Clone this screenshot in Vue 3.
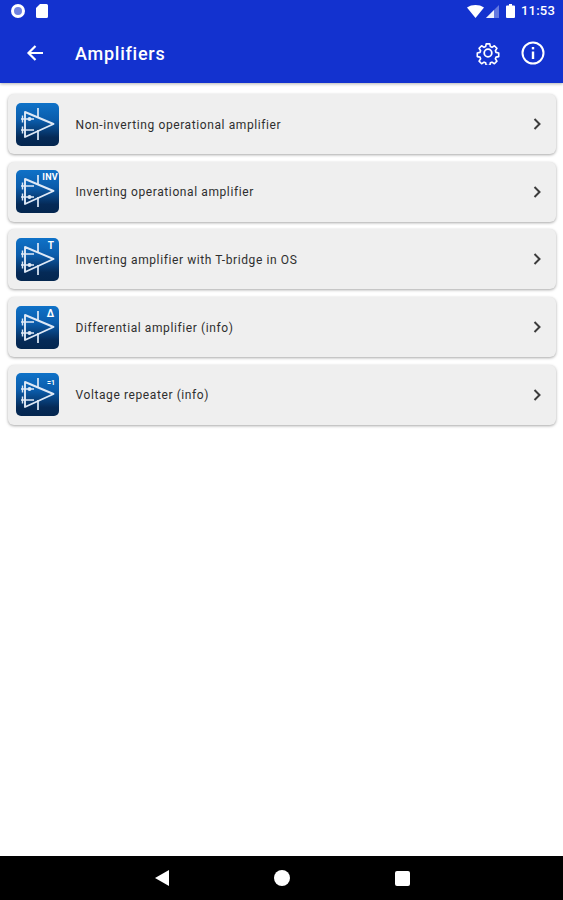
<template>
  <div class="screen">
    <header class="app-header">
      <div class="status-bar">
        <div class="status-left">
          <span class="notif-dot"></span>
          <svg class="sd-icon" width="12" height="14" viewBox="0 0 12 14">
            <path d="M4 0H10.500A1.500 1.500 0 0 1 12 1.500V12.500A1.500 1.500 0 0 1 10.500 14H1.500A1.500 1.500 0 0 1 0 12.500V4Z" fill="#fff" />
          </svg>
        </div>
        <div class="status-right">
          <svg width="17" height="13" viewBox="0 0 17 13">
            <path d="M0 2.500C4.800-.8 12.200-.8 17 2.500L8.500 13Z" fill="#fff" />
          </svg>
          <svg class="signal" width="13" height="13" viewBox="0 0 13 13">
            <path d="M13 0V13H0Z" fill="#fff" opacity=".35" />
            <path d="M8 5V13H0Z" fill="#fff" opacity=".9" />
          </svg>
          <svg class="battery" width="9" height="14" viewBox="0 0 9 14">
            <path d="M3 0H6V1.500H8A1 1 0 0 1 9 2.500V13A1 1 0 0 1 8 14H1A1 1 0 0 1 0 13V2.500A1 1 0 0 1 1 1.500H3Z" fill="#fff" />
          </svg>
          <span class="clock">11:53</span>
        </div>
      </div>
      <div class="toolbar">
        <button class="icon-btn back" aria-label="Back">
          <svg width="18" height="18" viewBox="0 0 18 18" fill="none" stroke="#fff" stroke-width="2.200">
            <path d="M17 9H2.500M9.500 2 2.500 9l7 7" />
          </svg>
        </button>
        <h1>Amplifiers</h1>
        <button class="icon-btn gear" aria-label="Settings">
          <svg width="24" height="24" viewBox="0 0 24 24" fill="none" stroke="#fff" stroke-width="1.800" stroke-linejoin="round">
            <path d="M10 1.800h4l.6 3.100 1.800.8 2.700-1.700 2.800 2.900-1.700 2.600.7 1.800 3 .7v4l-3 .6-.7 1.800 1.700 2.700-2.800 2.800-2.700-1.700-1.800.7-.6 3h-4l-.6-3-1.800-.7-2.700 1.700-2.800-2.800 1.700-2.700-.7-1.800-3-.6v-4l3-.7.700-1.800-1.700-2.600 2.800-2.900 2.700 1.700 1.800-.8Z" transform="translate(1.200 1.200) scale(.9)" />
            <circle cx="12" cy="12" r="3.800" />
          </svg>
        </button>
        <button class="icon-btn info" aria-label="Info">
          <svg width="24" height="24" viewBox="0 0 24 24" fill="none" stroke="#fff">
            <circle cx="12" cy="12" r="10.500" stroke-width="2" />
            <path d="M12 10.500V18" stroke-width="2.400" />
            <path d="M12 6V8.400" stroke-width="2.400" />
          </svg>
        </button>
      </div>
    </header>

    <main class="list">
      <div v-for="item in items" :key="item.title" class="card">
        <div class="thumb">
          <svg width="43" height="43" viewBox="0 0 43 43" fill="none" stroke="#dfe9f6" stroke-width="1.700">
            <path d="M9 9V34L37.500 21Z" stroke-width="1.900" stroke-linejoin="round" />
            <path d="M22 5V15M22 27V37M5 16H18M5 27H18" />
            <path d="M6.500 12.500V19.500M6.500 23.500V30.500" stroke-width="1.400" />
            <circle cx="13.500" :cy="item.dotY" r="2" fill="#dfe9f6" stroke="none" />
          </svg>
          <span v-if="item.badge" class="badge" :class="item.badgeClass">{{ item.badge }}</span>
        </div>
        <span class="title">{{ item.title }}</span>
        <svg class="chevron" width="9" height="12" viewBox="0 0 9 12" fill="none" stroke="#3c3c3c" stroke-width="2">
          <path d="M1.500 1 6.500 6l-5 5" />
        </svg>
      </div>
    </main>

    <nav class="nav-bar">
      <svg width="14" height="16" viewBox="0 0 14 16"><path d="M14 0V16L0 8Z" fill="#fff" /></svg>
      <span class="home"></span>
      <span class="recent"></span>
    </nav>
  </div>
</template>

<script setup>
const items = [
  { title: 'Non-inverting operational amplifier', badge: '', dotY: 16 },
  { title: 'Inverting operational amplifier', badge: 'INV', badgeClass: 'inv', dotY: 27 },
  { title: 'Inverting amplifier with T-bridge in OS', badge: 'T', badgeClass: 't', dotY: 27 },
  { title: 'Differential amplifier (info)', badge: 'Δ', badgeClass: 't', dotY: 27 },
  { title: 'Voltage repeater (info)', badge: '=1', badgeClass: 'one', dotY: 16 }
]
</script>

<style>
body {
  background: #fff;
}
</style>

<style scoped>
.screen {
  width: 563px;
  height: 900px;
  display: flex;
  flex-direction: column;
  background: #fff;
  font-family: Roboto, "Liberation Sans", sans-serif;
  overflow: hidden;
}

.app-header {
  height: 83px;
  flex: none;
  background: #1332cf;
  color: #fff;
  box-shadow: 0 1px 3px rgba(0, 0, 0, 0.3);
}

.status-bar {
  height: 25px;
  padding: 4px 8px 0 11px;
  box-sizing: border-box;
  display: flex;
  justify-content: space-between;
  align-items: flex-start;
}

.status-left {
  display: flex;
  align-items: center;
  gap: 11px;
}

.notif-dot {
  width: 14px;
  height: 14px;
  box-sizing: border-box;
  border: 3px solid #fff;
  border-radius: 50%;
  background: #6f82e0;
}

.status-right {
  display: flex;
  align-items: center;
}

.signal {
  margin-left: 2px;
}

.battery {
  margin-left: 7px;
}

.clock {
  margin-left: 6px;
  font-size: 13px;
  font-weight: 500;
  line-height: 14px;
  letter-spacing: 0.2px;
}

.toolbar {
  height: 58px;
  display: flex;
  align-items: center;
  padding-bottom: 2px;
  box-sizing: border-box;
}

.icon-btn {
  padding: 0;
  border: 0;
  background: none;
  display: flex;
}

.back {
  margin-left: 26px;
}

.toolbar h1 {
  margin: 0 0 0 31px;
  flex: 1;
  font-size: 18px;
  font-weight: 500;
  letter-spacing: 0.75px;
}

.gear {
  margin-right: 21px;
}

.info {
  margin-right: 18px;
}

.list {
  flex: 1;
  padding: 11px 7px 0 8px;
  display: flex;
  flex-direction: column;
  gap: 7.700px;
}

.card {
  height: 60px;
  flex: none;
  padding: 0 14px 0 8px;
  box-sizing: border-box;
  display: flex;
  align-items: center;
  background: #efefef;
  border-radius: 6px;
  box-shadow: 0 1px 3px rgba(0, 0, 0, 0.35);
}

.thumb {
  position: relative;
  width: 43px;
  height: 43px;
  flex: none;
  border-radius: 5px;
  background: linear-gradient(#0f72c8 0%, #0b5cab 40%, #052a57 80%, #04264f 100%);
}

.thumb svg {
  display: block;
}

.badge {
  position: absolute;
  top: 3px;
  right: 5px;
  color: #fff;
  font-size: 10px;
  font-weight: 700;
  line-height: 10px;
}

.badge.inv {
  right: 1px;
  top: 2px;
  font-size: 9px;
  letter-spacing: 0.3px;
}

.badge.one {
  top: 5px;
  right: 4px;
  font-size: 7px;
}

.title {
  flex: 1;
  margin: 1px 0 0 16.500px;
  font-size: 12px;
  font-weight: 400;
  letter-spacing: 0.6px;
  color: #2e2e2e;
}

.nav-bar {
  height: 44px;
  flex: none;
  background: #000;
  display: flex;
  align-items: center;
  padding-left: 155px;
}

.home {
  width: 16px;
  height: 16px;
  margin-left: 105px;
  border-radius: 50%;
  background: #fff;
}

.recent {
  width: 15px;
  height: 15px;
  margin-left: 105px;
  border-radius: 2px;
  background: #fff;
}
</style>
